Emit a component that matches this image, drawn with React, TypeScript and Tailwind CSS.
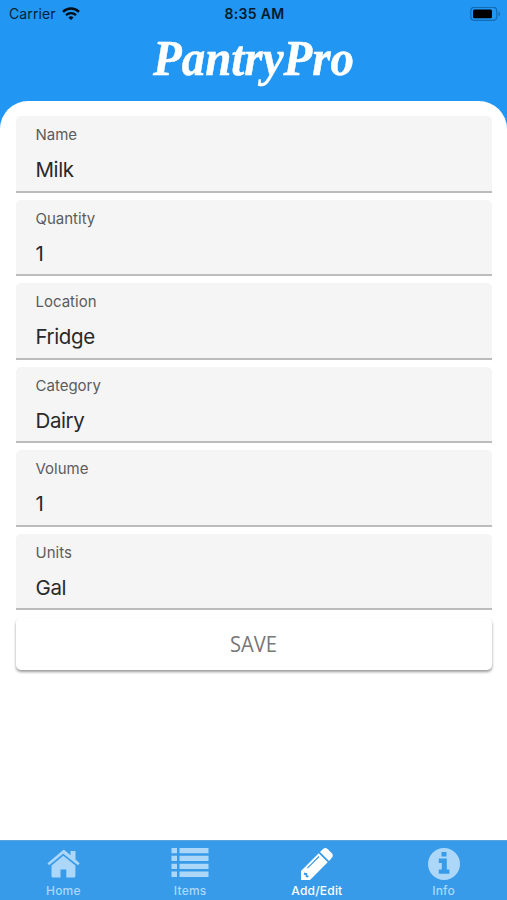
import type { ReactNode } from "react";

const fields = [
  { label: "Name", value: "Milk" },
  { label: "Quantity", value: "1" },
  { label: "Location", value: "Fridge" },
  { label: "Category", value: "Dairy" },
  { label: "Volume", value: "1" },
  { label: "Units", value: "Gal" },
];

function StatusBar() {
  return (
    <div className="grid h-7 grid-cols-3 items-center pl-[9px] pr-[6px] text-black">
      <div className="flex items-center gap-[6px] text-[14px] leading-7 tracking-[0.1px] text-[#052338]">
        Carrier
        <svg width="18" height="14" viewBox="0 0 18 14" fill="none" stroke="#020d16" strokeWidth="2.4">
          <path d="M1 4.8C5.5.4 12.5.4 17 4.8" />
          <path d="M4 8.1C6.8 5.5 11.2 5.5 14 8.1" />
          <path d="M6.4 10.4C8 9 10 9 11.6 10.4L9 13Z" fill="#020d16" stroke="none" />
        </svg>
      </div>
      <div className="-ml-px text-center text-[14px] font-semibold leading-7 tracking-[0.35px] text-[#031b2e]">8:35 AM</div>
      <svg className="justify-self-end" width="31" height="15" viewBox="0 0 31 15">
        <rect x=".8" y=".3" width="26" height="13" rx="3.5" fill="none" stroke="#146bb1" strokeWidth="1.2" />
        <rect x="3" y="2.5" width="19" height="8.7" rx="1.5" fill="#000" />
        <path d="M28.5 4.5C30.5 5.5 30.5 8.5 28.5 9.5Z" fill="#146bb1" />
      </svg>
    </div>
  );
}

function Field({ label, value }: (typeof fields)[number]) {
  return (
    <div className="flex h-[76.5px] flex-col rounded-t-[5px] border-b-2 border-[#bcbcbc] bg-[#f5f5f5] pl-5 pt-[9px]">
      <span className="text-[15px] leading-5 text-[#5c5c5c]">{label}</span>
      <span className="mt-[11px] text-[20.5px] leading-7 tracking-[-0.4px] text-[#292929]">{value}</span>
    </div>
  );
}

function Tab({ label, active = false, children }: { label: string; active?: boolean; children: ReactNode }) {
  return (
    <div className={`flex flex-1 flex-col items-center pt-[6px] ${active ? "text-white" : "text-[#acd7f8]"}`}>
      <svg width="40" height="36" viewBox="0 0 40 36" fill="currentColor">{children}</svg>
      <span className="text-[12px] font-medium leading-[15px] tracking-[0.2px]">{label}</span>
    </div>
  );
}

export default function App() {
  return (
    <div className="flex h-[900px] w-full flex-col overflow-hidden bg-[#2196f3] font-['Inter','Liberation_Sans',sans-serif]">
      <StatusBar />
      <header className="flex h-[73px] shrink-0 justify-center">
        <svg className="overflow-visible" width="230" height="73" viewBox="0 0 230 73" aria-label="PantryPro">
          <text x="14" y="47" fill="white" stroke="white" strokeWidth=".5" fontFamily="'Liberation Serif', serif" fontStyle="italic" fontWeight="700" fontSize="50" textLength="201" lengthAdjust="spacingAndGlyphs">PantryPro</text>
        </svg>
      </header>
      <main className="flex flex-1 flex-col rounded-t-[28px] bg-white px-[15.5px] pt-[15px]">
        <div className="flex flex-col gap-[7px]">
          {fields.map((field) => <Field key={field.label} {...field} />)}
        </div>
        <button className="mt-2 flex h-[52px] w-full items-center justify-center rounded-[5px] bg-white shadow-[0_2px_3px_rgba(0,0,0,.4)]">
          <svg className="overflow-visible" width="60" height="30" aria-label="SAVE">
            <text x="6" y="23" fontFamily="'Open Sans', sans-serif" fontSize="21.5" fill="#777" textLength="47" lengthAdjust="spacingAndGlyphs">SAVE</text>
          </svg>
        </button>
      </main>
      <nav className="flex h-[60px] shrink-0 border-t border-[#56a5e3] bg-[#379bea]">
        <Tab label="Home">
          <path d="M20.2 3 4.5 16.2l1.5 2L20.2 6.7 35 18.2l1.7-2-4.2-3.7V4h-5v4.2L21.8 3.3q-.8-.7-1.6-.3Z" />
          <path d="M20.3 8.8 8.5 18.4V29q0 1.5 1.5 1.5h7.5v-8h5.8v8h7.6q1.5 0 1.5-1.5V18.4Z" />
        </Tab>
        <Tab label="Items">
          <path d="M1.5 1h5.5v5.2h-5.5ZM9.5 1H38.5v5.2H9.5ZM1.5 8.8h5.5v5.2h-5.5ZM9.5 8.8H38.5v5.2H9.5ZM1.5 16.7h5.5v5.2h-5.5ZM9.5 16.7H38.5v5.2H9.5ZM1.5 24.6h5.5v5.4h-5.5ZM9.5 24.6H38.5V30H9.5Z" />
        </Tab>
        <Tab label="Add/Edit" active>
          <path fillRule="evenodd" d="M4 33v-9L21.7 6.3l9 9L13 33ZM10 20.7l.8.8L22.5 9.9l-.8-.8ZM7.3 25.5l-.7 2.2 2 .2.2 2.2 2 .4 1.2-1.5-1.6-.4-.2-2.4Z" />
          <path d="m23 5 3-3q2.4-2 4.8.2l4 4q2 2.3 0 4.6L32 14Z" />
        </Tab>
        <Tab label="Info">
          <path fillRule="evenodd" d="M20 1a16 16 0 1 0 0 32 16 16 0 0 0 0-32Zm-2.5 4h5v4.5h-5Zm-2.7 6.5h8V22.5h2.6v4.3H14.8v-4.3h3v-6.4h-3Z" />
        </Tab>
      </nav>
    </div>
  );
}
